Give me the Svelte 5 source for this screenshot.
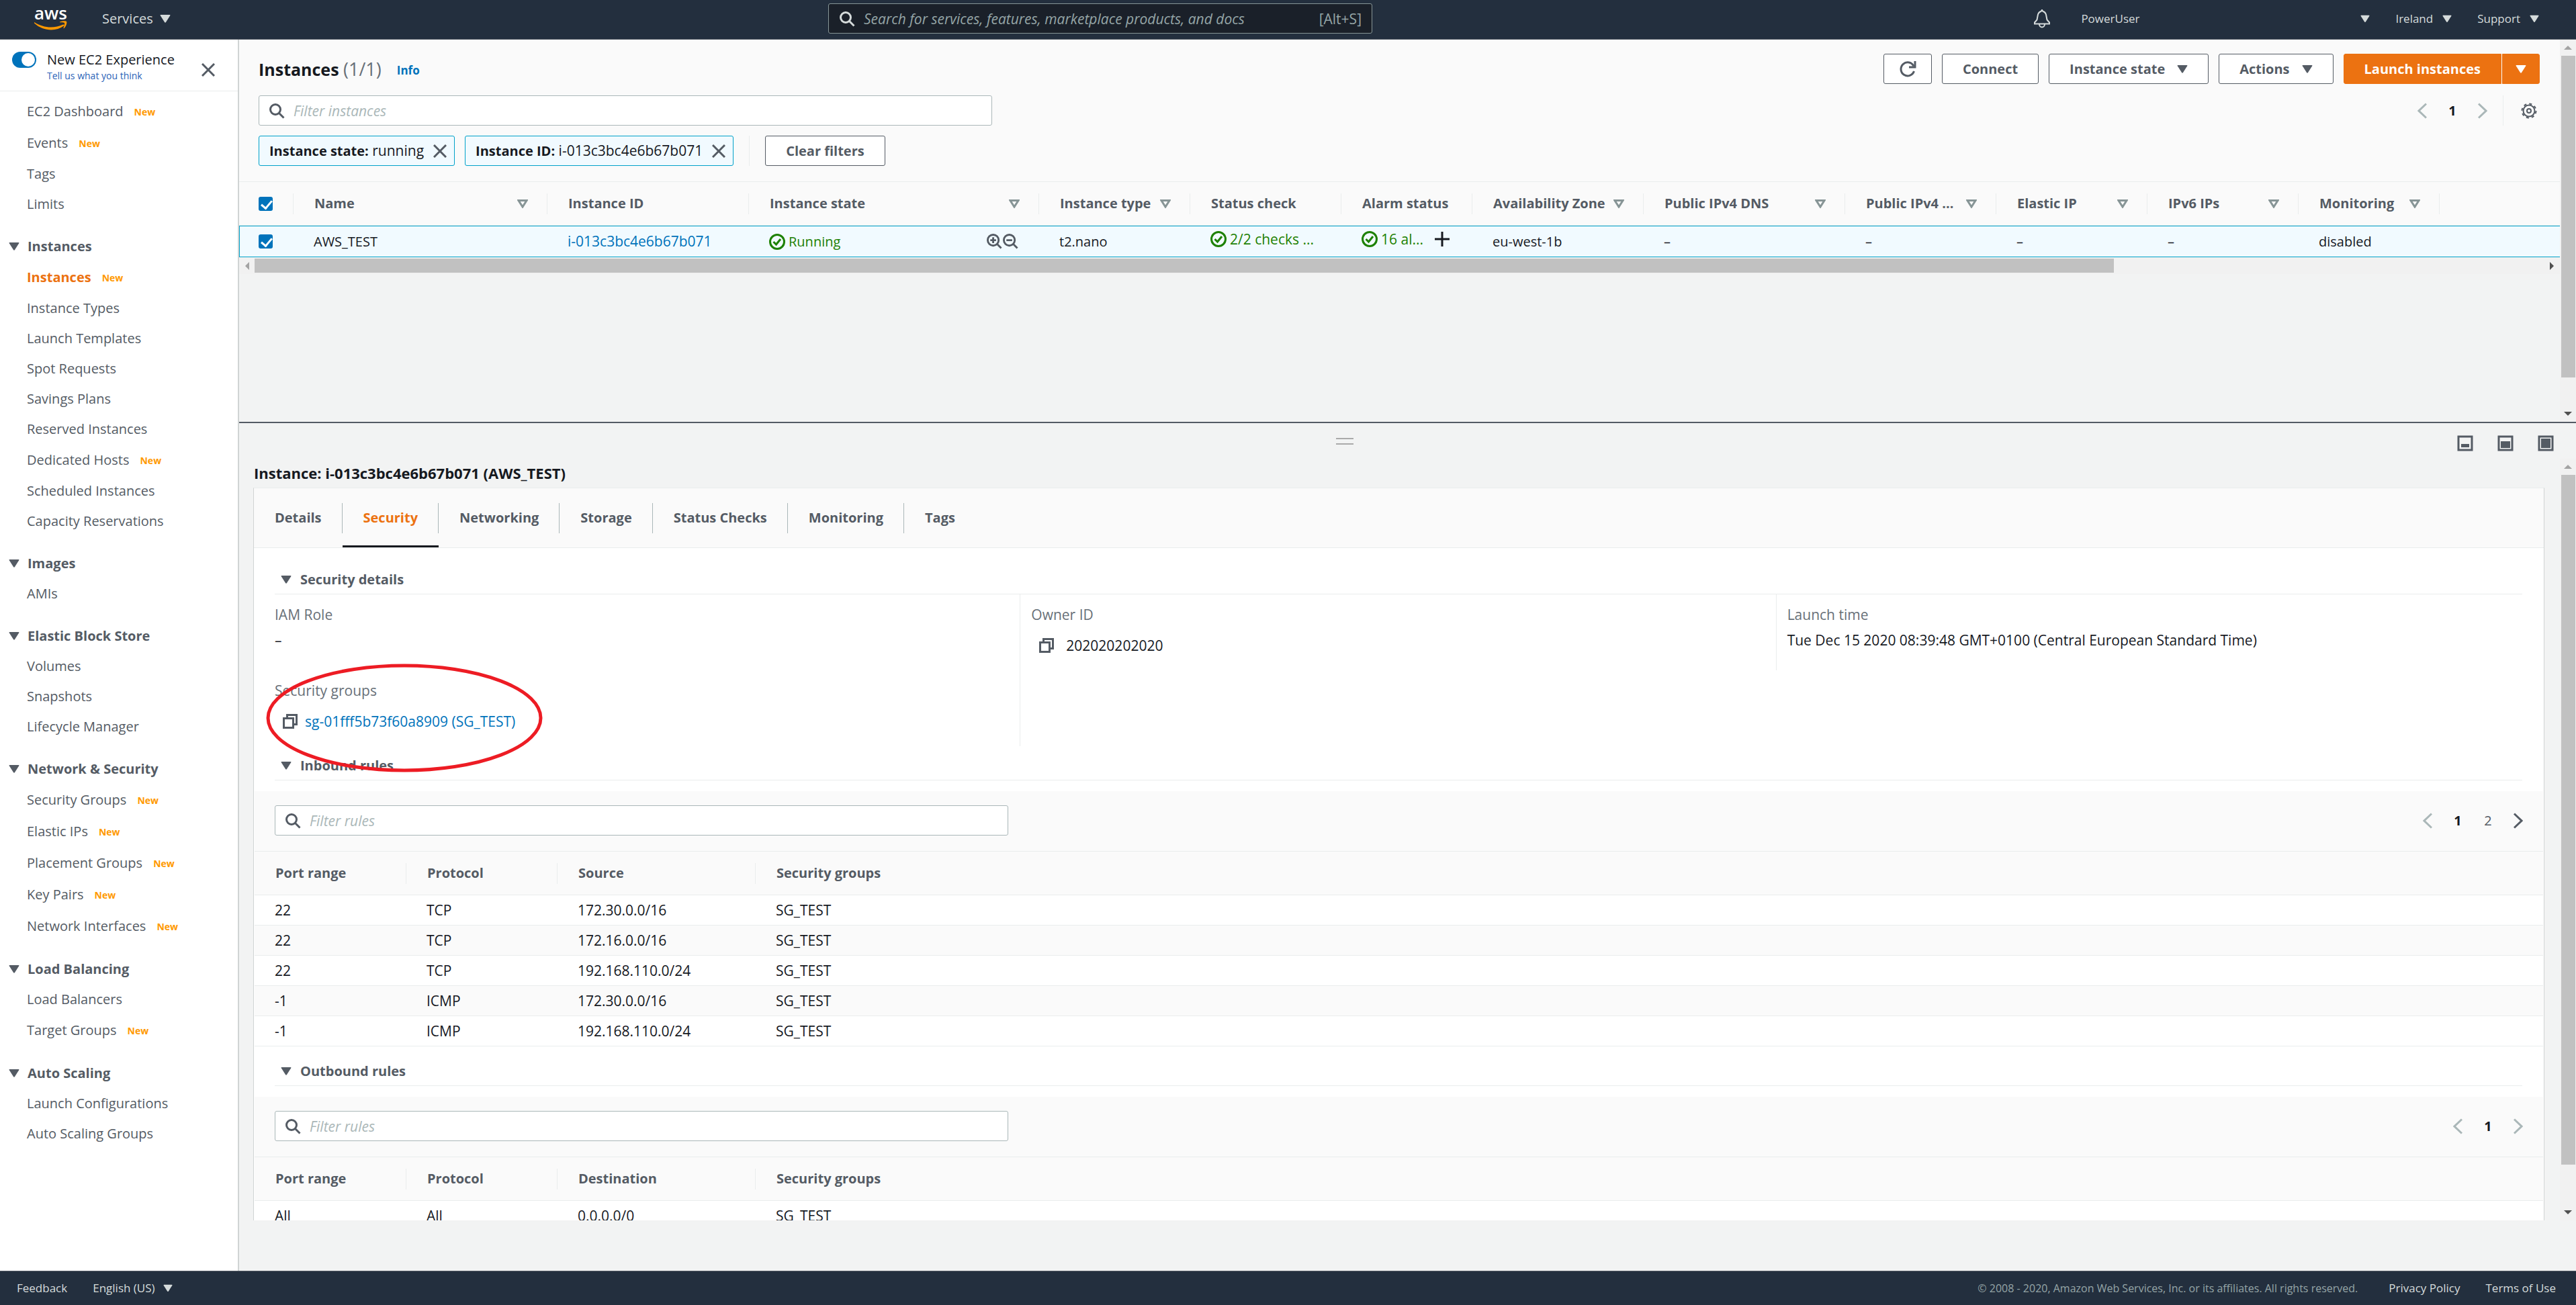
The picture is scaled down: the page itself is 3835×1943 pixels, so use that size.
<script>
  const navTop = [
    { label: "EC2 Dashboard", isNew: true },
    { label: "Events", isNew: true },
    { label: "Tags" },
    { label: "Limits" },
  ];

  const navGroups = [
    {
      title: "Instances",
      items: [
        { label: "Instances", isNew: true, active: true },
        { label: "Instance Types" },
        { label: "Launch Templates" },
        { label: "Spot Requests" },
        { label: "Savings Plans" },
        { label: "Reserved Instances" },
        { label: "Dedicated Hosts", isNew: true },
        { label: "Scheduled Instances" },
        { label: "Capacity Reservations" },
      ],
    },
    { title: "Images", items: [{ label: "AMIs" }] },
    {
      title: "Elastic Block Store",
      items: [
        { label: "Volumes" },
        { label: "Snapshots" },
        { label: "Lifecycle Manager" },
      ],
    },
    {
      title: "Network & Security",
      items: [
        { label: "Security Groups", isNew: true },
        { label: "Elastic IPs", isNew: true },
        { label: "Placement Groups", isNew: true },
        { label: "Key Pairs", isNew: true },
        { label: "Network Interfaces", isNew: true },
      ],
    },
    {
      title: "Load Balancing",
      items: [{ label: "Load Balancers" }, { label: "Target Groups", isNew: true }],
    },
    {
      title: "Auto Scaling",
      items: [{ label: "Launch Configurations" }, { label: "Auto Scaling Groups" }],
    },
  ];

  const columns = [
    { label: "Name", width: 378, sortable: true },
    { label: "Instance ID", width: 300 },
    { label: "Instance state", width: 432, sortable: true },
    { label: "Instance type", width: 225, sortable: true },
    { label: "Status check", width: 225 },
    { label: "Alarm status", width: 195 },
    { label: "Availability Zone", width: 255, sortable: true },
    { label: "Public IPv4 DNS", width: 300, sortable: true },
    { label: "Public IPv4 ...", width: 225, sortable: true },
    { label: "Elastic IP", width: 225, sortable: true },
    { label: "IPv6 IPs", width: 225, sortable: true },
    { label: "Monitoring", width: 210, sortable: true },
  ];

  const tabs = [
    "Details",
    "Security",
    "Networking",
    "Storage",
    "Status Checks",
    "Monitoring",
    "Tags",
  ];
  let activeTab = "Security";

  const ruleSets = [
    {
      id: "inbound",
      title: "Inbound rules",
      target: "Source",
      pages: [1, 2],
      rows: [
        ["22", "TCP", "172.30.0.0/16", "SG_TEST"],
        ["22", "TCP", "172.16.0.0/16", "SG_TEST"],
        ["22", "TCP", "192.168.110.0/24", "SG_TEST"],
        ["-1", "ICMP", "172.30.0.0/16", "SG_TEST"],
        ["-1", "ICMP", "192.168.110.0/24", "SG_TEST"],
      ],
    },
    {
      id: "outbound",
      title: "Outbound rules",
      target: "Destination",
      pages: [1],
      rows: [["All", "All", "0.0.0.0/0", "SG_TEST"]],
    },
  ];
</script>

{#snippet caret()}
  <svg class="caret" viewBox="0 0 16 12" aria-hidden="true">
    <path d="M1.500 0h13q1.500 0 .7 1.300L9 11q-1 1.500-2 0L.8 1.300Q0 0 1.500 0z" />
  </svg>
{/snippet}

{#snippet sortIcon()}
  <svg class="sort" viewBox="0 0 16 13" aria-hidden="true">
    <path d="M2 1.500h12L8 11z" />
  </svg>
{/snippet}

{#snippet search()}
  <svg class="search-icon" viewBox="0 0 24 24" aria-hidden="true">
    <circle cx="10" cy="10" r="7.500" />
    <path d="M15.500 15.500l7 7" />
  </svg>
{/snippet}

{#snippet cross()}
  <svg class="cross" viewBox="0 0 20 20" aria-hidden="true">
    <path d="M1 1l18 18M19 1L1 19" />
  </svg>
{/snippet}

{#snippet chevron(dir)}
  <svg class="chevron" viewBox="0 0 14 24" aria-hidden="true">
    <path d={dir === "left" ? "M13 1.500L2 12l11 10.500" : "M1 1.500L12 12 1 22.500"} />
  </svg>
{/snippet}

{#snippet okIcon()}
  <svg class="ok" viewBox="0 0 24 24" aria-hidden="true">
    <circle cx="12" cy="12" r="10.500" />
    <path d="M6.500 12l4 4L17 8" />
  </svg>
{/snippet}

{#snippet copyIcon()}
  <svg class="copy" viewBox="0 0 22 22" aria-hidden="true">
    <path d="M6.500 5V1.500h14v14H17M1.500 6.500h14v14h-14z" />
  </svg>
{/snippet}

{#snippet navItem(item)}
  <li class="nav__item" class:nav__item--new={item.isNew}>
    <a href="#top" class:active={item.active}>{item.label}</a>
    {#if item.isNew}<span class="badge">New</span>{/if}
  </li>
{/snippet}

<div class="app" id="top">
  <header class="topbar">
    <div class="topbar__left">
      <a class="logo" href="#top" aria-label="AWS home">
        <svg viewBox="0 0 50 34">
          <text x="1" y="18">aws</text>
          <path
            class="smile"
            d="M1 22c13 8.500 29 10 43 3.500 1.500-.5 2.500 1 1 2C33 36.500 14 35.500 1 23.500z"
          />
          <path
            class="smile"
            d="M39 21.500c5-2 10-1.500 10.300 0 .4 2.500-1 7-3.800 9.500-.6.500-1.200.2-1-.5 1-2.500 2-5.800 1.600-6.900-.4-1.200-4-1.300-6.600-1.200z"
          />
        </svg>
      </a>
      <button class="topbar__menu topbar__menu--big">Services {@render caret()}</button>
    </div>
    <label class="topbar__search">
      {@render search()}
      <input
        type="text"
        aria-label="Search"
        placeholder="Search for services, features, marketplace products, and docs"
      />
      <span>[Alt+S]</span>
    </label>
    <div class="topbar__right">
      <button class="bell" aria-label="Notifications">
        <svg viewBox="0 0 26 28">
          <path d="M2 21.500v-2l3.500-4 1.500-8Q8.500 3.500 11.500 3L13 .8 14.500 3q3 .5 4.500 4.500l1.500 8 3.500 4v2z" />
          <path d="M9 22c0 6 8 6 8 0" />
        </svg>
      </button>
      <button class="topbar__menu topbar__menu--user">PowerUser {@render caret()}</button>
      <button class="topbar__menu">Ireland {@render caret()}</button>
      <button class="topbar__menu">Support {@render caret()}</button>
    </div>
  </header>

  <div class="body">
    <aside class="sidebar">
      <div class="sidebar__head">
        <input id="experience" class="toggle" type="checkbox" checked />
        <div class="sidebar__title">
          <label for="experience">New EC2 Experience</label>
          <a href="#top">Tell us what you think</a>
        </div>
        <button class="plain" aria-label="Close navigation">{@render cross()}</button>
      </div>
      <nav class="nav">
        <ul>
          {#each navTop as item}{@render navItem(item)}{/each}
        </ul>
        {#each navGroups as group}
          <button class="nav__group">{@render caret()} {group.title}</button>
          <ul>
            {#each group.items as item}{@render navItem(item)}{/each}
          </ul>
        {/each}
      </nav>
    </aside>

    <main class="main">
      <section class="pane">
        <div class="pane__content">
          <div class="instances__head">
            <div class="row">
              <h1>Instances <span>(1/1)</span></h1>
              <a class="info" href="#top">Info</a>
              <div class="actions">
                <button class="btn btn--icon" aria-label="Refresh">
                  <svg viewBox="0 0 26 26">
                    <path d="M22.500 16A10 10 0 1 1 22 8.500" />
                    <path d="M24 1v9h-9" />
                  </svg>
                </button>
                <button class="btn">Connect</button>
                <button class="btn">Instance state {@render caret()}</button>
                <button class="btn">Actions {@render caret()}</button>
                <div class="split">
                  <button class="btn btn--primary">Launch instances</button>
                  <button class="btn btn--primary btn--caret" aria-label="More launch options">
                    {@render caret()}
                  </button>
                </div>
              </div>
            </div>
            <div class="row row--filter">
              <label class="filter">
                {@render search()}
                <input type="text" aria-label="Filter instances" placeholder="Filter instances" />
              </label>
              <div class="pager">
                <button class="plain dim" aria-label="Previous page">{@render chevron("left")}</button>
                <button class="plain current">1</button>
                <button class="plain dim" aria-label="Next page">{@render chevron("right")}</button>
              </div>
              <button class="plain gear" aria-label="Preferences">
                <svg viewBox="0 0 24 24">
                  <circle cx="12" cy="12" r="8.500" />
                  <circle class="teeth" cx="12" cy="12" r="10.500" />
                  <circle cx="12" cy="12" r="3" />
                </svg>
              </button>
            </div>
            <div class="row row--tokens">
              <span class="token">
                <span><b>Instance state:</b> running</span>
                <button class="plain" aria-label="Remove filter">{@render cross()}</button>
              </span>
              <span class="token">
                <span><b>Instance ID:</b> i-013c3bc4e6b67b071</span>
                <button class="plain" aria-label="Remove filter">{@render cross()}</button>
              </span>
              <div class="clear"><button class="btn">Clear filters</button></div>
            </div>
          </div>

          <table class="instances">
            <colgroup>
              <col style="width: 81px" />
              {#each columns as column}
                <col style="width: {column.width}px" />
              {/each}
              <col />
            </colgroup>
            <thead>
              <tr>
                <th>
                  <div class="th th--check">
                    <input type="checkbox" aria-label="Select all" checked />
                  </div>
                </th>
                {#each columns as column}
                  <th>
                    <div class="th">
                      {column.label}
                      {#if column.sortable}{@render sortIcon()}{/if}
                    </div>
                  </th>
                {/each}
                <th></th>
              </tr>
            </thead>
            <tbody>
              <tr>
                <td class="check"><input type="checkbox" aria-label="Select AWS_TEST" checked /></td>
                <td>AWS_TEST</td>
                <td><a href="#top">i-013c3bc4e6b67b071</a></td>
                <td>
                  <div class="state">
                    <span class="good">{@render okIcon()} Running</span>
                    <span class="magnifiers">
                      <svg viewBox="0 0 24 24" aria-hidden="true">
                        <circle cx="10" cy="10" r="8.500" />
                        <path d="M16 16l6.500 6.500M10 5.500v9M5.500 10h9" />
                      </svg>
                      <svg viewBox="0 0 24 24" aria-hidden="true">
                        <circle cx="10" cy="10" r="8.500" />
                        <path d="M16 16l6.500 6.500M5.500 10h9" />
                      </svg>
                    </span>
                  </div>
                </td>
                <td>t2.nano</td>
                <td class="lifted"><span class="good">{@render okIcon()} 2/2 checks ...</span></td>
                <td class="lifted">
                  <div class="alarm">
                    <span class="good">{@render okIcon()} 16 al...</span>
                    <svg class="plus" viewBox="0 0 22 22" aria-hidden="true">
                      <path d="M11 0v22M0 11h22" />
                    </svg>
                  </div>
                </td>
                <td>eu-west-1b</td>
                <td>–</td>
                <td>–</td>
                <td>–</td>
                <td>–</td>
                <td>disabled</td>
                <td></td>
              </tr>
            </tbody>
          </table>
          <div class="hscroll" aria-hidden="true">
            <i class="arrow arrow--left"></i>
            <div class="hscroll__thumb"></div>
            <i class="arrow arrow--right"></i>
          </div>
        </div>
        <div class="vscroll" aria-hidden="true">
          <i class="arrow arrow--up"></i>
          <div class="vscroll__thumb vscroll__thumb--top"></div>
          <i class="arrow arrow--down"></i>
        </div>
      </section>

      <section class="details">
        <div class="details__bar">
          <div class="handle"></div>
          <div class="layouts">
            <button class="plain" aria-label="Minimize panel">
              <svg viewBox="0 0 24 24">
                <path d="M2 2h20v20H2z" />
                <path class="fill" d="M6 13h12v5H6z" />
              </svg>
            </button>
            <button class="plain" aria-label="Split panel">
              <svg viewBox="0 0 24 24">
                <path d="M2 2h20v20H2z" />
                <path class="fill" d="M5 9h14v10H5z" />
              </svg>
            </button>
            <button class="plain" aria-label="Maximize panel">
              <svg viewBox="0 0 24 24">
                <path d="M2 2h20v20H2z" />
                <path class="fill" d="M5 5h14v14H5z" />
              </svg>
            </button>
          </div>
        </div>

        <div class="details__scroll">
          <div class="details__content">
            <h2>Instance: i-013c3bc4e6b67b071 (AWS_TEST)</h2>
            <div class="card">
              <div class="tabs" role="tablist">
                {#each tabs as tab}
                  <button
                    class="tab"
                    role="tab"
                    aria-selected={tab === activeTab}
                    on:click={() => (activeTab = tab)}
                  >
                    <span>{tab}</span>
                  </button>
                {/each}
              </div>

              <div class="panel">
                <h3 class="section">{@render caret()} Security details</h3>
                <div class="facts">
                  <div class="facts__column">
                    <div class="fact">
                      <div class="fact__label">IAM Role</div>
                      <div class="fact__value">–</div>
                    </div>
                    <div class="fact">
                      <div class="fact__label">Security groups</div>
                      <div class="fact__value fact__value--copy">
                        {@render copyIcon()}
                        <a href="#top">sg-01fff5b73f60a8909 (SG_TEST)</a>
                      </div>
                      <svg class="highlight" viewBox="0 0 412 162" aria-hidden="true">
                        <ellipse cx="206" cy="81" rx="203" ry="78" />
                      </svg>
                    </div>
                  </div>
                  <div class="facts__column">
                    <div class="fact">
                      <div class="fact__label">Owner ID</div>
                      <div class="fact__value fact__value--copy fact__value--wide">
                        {@render copyIcon()} 202020202020
                      </div>
                    </div>
                  </div>
                  <div class="facts__column">
                    <div class="fact">
                      <div class="fact__label">Launch time</div>
                      <div class="fact__value">
                        Tue Dec 15 2020 08:39:48 GMT+0100 (Central European Standard Time)
                      </div>
                    </div>
                  </div>
                </div>

                {#each ruleSets as set}
                  <h3 class="section">{@render caret()} {set.title}</h3>
                  <div class="rules">
                    <div class="rules__bar">
                      <label class="filter">
                        {@render search()}
                        <input
                          type="text"
                          aria-label="Filter {set.id} rules"
                          placeholder="Filter rules"
                        />
                      </label>
                      <div class="pager">
                        <button class="plain dim" aria-label="Previous page">
                          {@render chevron("left")}
                        </button>
                        {#each set.pages as page}
                          <button class="plain" class:current={page === 1}>{page}</button>
                        {/each}
                        <button
                          class="plain"
                          class:dim={set.pages.length === 1}
                          aria-label="Next page"
                        >
                          {@render chevron("right")}
                        </button>
                      </div>
                    </div>
                    <table>
                      <thead>
                        <tr>
                          <th class="port"><div class="th">Port range</div></th>
                          <th class="protocol"><div class="th">Protocol</div></th>
                          <th class="target"><div class="th">{set.target}</div></th>
                          <th><div class="th th--last">Security groups</div></th>
                        </tr>
                      </thead>
                      <tbody>
                        {#each set.rows as row}
                          <tr>
                            {#each row as cell}<td>{cell}</td>{/each}
                          </tr>
                        {/each}
                      </tbody>
                    </table>
                  </div>
                {/each}
              </div>
            </div>
          </div>
          <div class="vscroll" aria-hidden="true">
            <i class="arrow arrow--up"></i>
            <div class="vscroll__thumb"></div>
            <i class="arrow arrow--down"></i>
          </div>
        </div>
      </section>
    </main>
  </div>

  <footer class="footer">
    <a href="#top">Feedback</a>
    <button class="footer__language">English (US) {@render caret()}</button>
    <span class="footer__copyright">
      © 2008 - 2020, Amazon Web Services, Inc. or its affiliates. All rights reserved.
    </span>
    <a href="#top">Privacy Policy</a>
    <a href="#top">Terms of Use</a>
  </footer>
</div>

<style>
  :global(body) {
    margin: 0;
  }

  .app {
    display: flex;
    flex-direction: column;
    height: 100vh;
    overflow: hidden;
    background: #f2f3f3;
    color: #16191f;
    font-family: "Open Sans", "Noto Sans", sans-serif;
    font-size: 20px;
    line-height: 30px;
  }
  .app * {
    box-sizing: border-box;
  }

  button,
  input {
    font: inherit;
    color: inherit;
  }
  button {
    display: flex;
    align-items: center;
    margin: 0;
    padding: 0;
    border: 0;
    background: none;
    white-space: nowrap;
    cursor: pointer;
  }
  a {
    color: #0073bb;
    text-decoration: none;
  }
  ul {
    margin: 0;
    padding: 0;
    list-style: none;
  }
  svg {
    display: block;
    flex: none;
    fill: none;
    stroke: currentColor;
    stroke-width: 3;
  }
  .caret {
    width: 16px;
    height: 12px;
    fill: currentColor;
    stroke: none;
  }
  .sort {
    width: 16px;
    height: 13px;
    color: #879596;
  }
  .search-icon {
    width: 24px;
    height: 24px;
  }
  .cross {
    width: 20px;
    height: 20px;
    color: #545b64;
  }
  .chevron {
    width: 14px;
    height: 24px;
  }
  .ok {
    width: 24px;
    height: 24px;
  }
  .copy {
    width: 22px;
    height: 22px;
    color: #545b64;
  }

  /* top bar */
  .topbar {
    display: grid;
    grid-template-columns: 1233fr 810fr 1792fr;
    align-items: center;
    flex: none;
    height: 59px;
    padding-bottom: 3px;
    border-bottom: 1px solid #545b64;
    background: #232f3e;
    color: #d5dbdb;
    font-size: 17px;
  }
  .topbar__left {
    display: flex;
    align-items: center;
    gap: 52px;
    padding-left: 50px;
  }
  .logo svg {
    width: 50px;
    height: 34px;
    overflow: visible;
  }
  .logo text {
    fill: #fff;
    stroke: none;
    font-size: 26px;
    font-weight: 600;
  }
  .smile {
    fill: #f90;
    stroke: none;
  }
  .topbar__menu {
    gap: 14px;
  }
  .topbar__menu .caret {
    width: 14px;
  }
  .topbar__menu--big {
    gap: 10px;
    font-size: 20px;
  }
  .topbar__menu--big .caret {
    width: 16px;
  }
  .topbar__menu--user {
    flex: 0 0 430px;
    justify-content: space-between;
  }
  .topbar__search {
    display: flex;
    align-items: center;
    gap: 13px;
    height: 45px;
    padding: 0 15px;
    border: 1px solid #879596;
    border-radius: 3px;
    background: #1a2029;
    font-size: 21px;
  }
  .topbar__search span {
    color: #95a5a6;
  }
  .topbar__right {
    display: flex;
    justify-content: flex-end;
    gap: 38px;
    padding-right: 55px;
  }
  .bell {
    margin-right: 7px;
  }
  .bell svg {
    width: 26px;
    height: 28px;
    stroke-width: 2;
  }

  input[type="text"] {
    flex: 1;
    min-width: 0;
    padding: 0;
    border: 0;
    outline: 0;
    background: none;
  }
  input::placeholder {
    color: #aab7b8;
    font-style: italic;
    opacity: 1;
  }
  .topbar__search input::placeholder {
    color: #95a5a6;
  }

  .body {
    display: flex;
    flex: 1;
    min-height: 0;
  }

  /* sidebar */
  .sidebar {
    flex: none;
    width: 356px;
    border-right: 2px solid #d0d4d4;
    background: #fff;
    color: #545b64;
  }
  .sidebar__head {
    display: flex;
    justify-content: space-between;
    height: 77px;
    padding: 15px 34px 0 18px;
    border-bottom: 1px solid #eaeded;
  }
  .sidebar__head .plain {
    height: 60px;
  }
  .sidebar__title {
    display: flex;
    flex-direction: column;
    flex: 1;
    padding-left: 16px;
    color: #16191f;
  }
  .sidebar__title a {
    color: #2a63b8;
    font-size: 14px;
    line-height: 18px;
  }
  .toggle {
    appearance: none;
    flex: none;
    width: 36px;
    height: 24px;
    margin: 3px 0 0;
    padding: 2px;
    border-radius: 12px;
    background: #0073bb;
  }
  .toggle::before {
    content: "";
    display: block;
    width: 20px;
    height: 20px;
    margin-left: auto;
    border-radius: 50%;
    background: #fff;
  }
  .nav {
    padding-top: 6px;
  }
  .nav__item {
    display: flex;
    align-items: center;
    gap: 16px;
    height: 45px;
    padding-left: 40px;
  }
  .nav__item--new {
    height: 47px;
  }
  .nav__item a {
    color: #545b64;
  }
  .nav__item a.active {
    color: #ec7211;
    font-weight: 700;
  }
  .badge {
    padding-top: 3px;
    color: #ff9900;
    font-size: 14px;
    font-weight: 700;
  }
  .nav__group {
    gap: 12px;
    height: 45px;
    margin-top: 18px;
    padding-left: 13px;
    font-weight: 700;
  }

  /* instance list */
  .main {
    display: flex;
    flex: 1;
    flex-direction: column;
    min-width: 0;
  }
  .pane {
    display: flex;
    flex: none;
    height: 571px;
    border-bottom: 2px solid #545b64;
  }
  .pane__content {
    flex: 1;
    min-width: 0;
  }
  .instances__head {
    padding: 21px 30px 23px 29px;
    border-bottom: 1px solid #eaeded;
    background: #fafafa;
  }
  .row {
    display: flex;
    align-items: center;
    height: 45px;
  }
  h1 {
    margin: 0;
    font-size: 25px;
    line-height: 36px;
  }
  h1 span {
    color: #687078;
    font-size: 27px;
    font-weight: 400;
  }
  .info {
    padding: 5px 0 0 23px;
    font-size: 17px;
    font-weight: 700;
  }
  .actions {
    display: flex;
    gap: 15px;
    margin-left: auto;
  }
  .btn {
    gap: 18px;
    height: 45px;
    padding: 0 30px;
    border: 1px solid #545b64;
    border-radius: 3px;
    background: #fff;
    color: #545b64;
    font-weight: 700;
  }
  .btn--icon {
    padding: 0 22px;
  }
  .btn--icon svg {
    width: 26px;
    height: 26px;
  }
  .split {
    display: flex;
    gap: 1px;
  }
  .btn--primary {
    border-color: #ec7211;
    border-radius: 3px 0 0 3px;
    background: #ec7211;
    color: #fff;
  }
  .btn--caret {
    padding: 0 19px;
    border-radius: 0 3px 3px 0;
  }
  .row--filter {
    margin-top: 17px;
  }
  .filter {
    display: flex;
    align-items: center;
    gap: 13px;
    flex: 0 0 1092px;
    height: 45px;
    padding: 0 14px;
    border: 1px solid #aab7b8;
    border-radius: 3px;
    background: #fff;
    font-size: 21px;
  }
  .filter .search-icon {
    color: #545b64;
  }
  .pager {
    display: flex;
    gap: 15px;
    margin-left: auto;
    color: #545b64;
  }
  .pager .plain {
    justify-content: center;
    width: 30px;
  }
  .pager .current {
    color: #16191f;
    font-weight: 700;
  }
  .pager .dim {
    color: #aab7b8;
  }
  .gear {
    height: 45px;
    margin-left: 15px;
    padding: 0 4px 0 26px;
    border-left: 1px solid #eaeded;
    color: #545b64;
  }
  .gear svg {
    width: 24px;
    height: 24px;
    stroke-width: 2;
  }
  .teeth {
    stroke-dasharray: 4.120;
  }
  .row--tokens {
    gap: 15px;
    margin-top: 15px;
  }
  .token {
    display: flex;
    align-items: center;
    gap: 14px;
    height: 45px;
    padding: 0 11px 0 15px;
    border: 1px solid #00a1c9;
    border-radius: 3px;
    background: #f1faff;
    font-size: 21px;
  }
  .token b {
    font-size: 20px;
  }
  .clear {
    margin-left: 8px;
    padding-left: 23px;
    border-left: 1px solid #eaeded;
  }

  table {
    width: 100%;
    table-layout: fixed;
    border-collapse: separate;
    border-spacing: 0;
  }
  th {
    height: 65px;
    padding: 0;
    border-bottom: 1px solid #eaeded;
    background: #fafafa;
    color: #545b64;
    font-weight: 700;
    text-align: left;
    white-space: nowrap;
  }
  .th {
    display: flex;
    align-items: center;
    justify-content: space-between;
    height: 31px;
    padding: 0 28px 0 31px;
    border-right: 1px solid #eaeded;
  }
  .th--last {
    border: 0;
  }
  .th--check {
    padding-left: 29px;
  }
  td {
    height: 45px;
    padding: 0 0 0 30px;
    white-space: nowrap;
  }
  input[type="checkbox"]:not(.toggle) {
    appearance: none;
    display: block;
    width: 21px;
    height: 21px;
    margin: 0;
    padding: 2px 0 0 7px;
    border-radius: 3px;
    background: #0073bb;
  }
  input[type="checkbox"]:not(.toggle)::before {
    content: "";
    display: block;
    width: 7px;
    height: 13px;
    border: solid #fff;
    border-width: 0 3px 3px 0;
    transform: rotate(40deg);
  }
  .instances td {
    border-top: 1px solid #00a1c9;
    border-bottom: 1px solid #00a1c9;
    height: 47px;
    background: #f1faff;
  }
  .instances td a {
    font-size: 21px;
  }
  .instances td.check {
    padding-left: 28px;
    border-left: 1px solid #00a1c9;
  }
  .instances td.lifted {
    padding-top: 4px;
    vertical-align: top;
  }
  .lifted {
    font-size: 21px;
  }
  .good {
    display: flex;
    align-items: center;
    gap: 5px;
    color: #1d8102;
  }
  .state {
    display: flex;
    align-items: center;
    justify-content: space-between;
    padding-right: 31px;
  }
  .magnifiers {
    display: flex;
    gap: 1px;
    color: #545b64;
  }
  .magnifiers svg {
    width: 23px;
    height: 23px;
    stroke-width: 3;
  }
  .alarm {
    display: flex;
    align-items: center;
    gap: 17px;
  }
  .plus {
    width: 22px;
    height: 22px;
  }

  /* scrollbars */
  .hscroll {
    display: flex;
    align-items: center;
    height: 25px;
    padding: 2px 9px;
    background: #f1f1f1;
  }
  .hscroll__thumb {
    width: calc(81% - 16px);
    height: 21px;
    margin: 0 auto 0 8px;
    background: #c1c1c1;
  }
  .vscroll {
    display: flex;
    align-items: center;
    flex: none;
    flex-direction: column;
    width: 24px;
    padding: 9px 0;
    background: #f1f1f1;
  }
  .vscroll__thumb {
    width: 21px;
    height: 92%;
    margin: 9px 0 auto;
    background: #c1c1c1;
  }
  .vscroll__thumb--top {
    height: 87%;
  }
  .arrow {
    flex: none;
    border: 6px solid transparent;
  }
  .arrow--left {
    border-right-color: #a3a3a3;
    border-left: 0;
  }
  .arrow--right {
    border-left-color: #505050;
    border-right: 0;
  }
  .arrow--up {
    border-bottom-color: #a3a3a3;
    border-top: 0;
  }
  .arrow--down {
    border-top-color: #505050;
    border-bottom: 0;
  }

  /* details split panel */
  .details {
    display: flex;
    flex: 1;
    flex-direction: column;
    min-height: 0;
    padding-bottom: 75px;
  }
  .details__bar {
    display: flex;
    align-items: center;
    flex: none;
    height: 53px;
    padding-right: 33px;
  }
  .handle {
    width: 26px;
    height: 10px;
    margin: 0 auto;
    border: solid #aaa;
    border-width: 2px 0;
  }
  .layouts {
    display: flex;
    gap: 36px;
    padding: 7px 0 0 10px;
    color: #545b64;
  }
  .layouts svg {
    width: 24px;
    height: 24px;
  }
  .fill {
    fill: currentColor;
    stroke: none;
  }
  .details__scroll {
    display: flex;
    flex: 1;
    min-height: 0;
  }
  .details__content {
    flex: 1;
    min-width: 0;
    overflow: hidden;
    padding: 6px 23px 0 21px;
  }
  h2 {
    margin: 0 0 7px 1px;
    font-size: 22px;
    line-height: 30px;
  }
  .card {
    border: 1px solid #d0d4d4;
    border-top-color: #eaeded;
    background: #fff;
  }
  .tabs {
    display: flex;
    height: 89px;
    border-bottom: 1px solid #eaeded;
    background: #fafafa;
  }
  .tab {
    color: #545b64;
    font-weight: 700;
    border-top: 3px solid transparent;
    border-bottom: 3px solid transparent;
  }
  .tab span {
    padding: 7px 30px 8px 31px;
    border-right: 1px solid #aab7b8;
  }
  .tab:last-child span {
    border: 0;
  }
  .tab[aria-selected="true"] {
    border-bottom-color: #16191f;
    color: #ec7211;
  }
  .panel {
    padding-top: 18px;
  }
  .section {
    display: flex;
    align-items: center;
    gap: 13px;
    margin: 0 32px 0 31px;
    padding: 14px 0 6px 9px;
    border-bottom: 1px solid #eaeded;
    color: #545b64;
    font-size: 20px;
    line-height: 30px;
  }
  .facts {
    display: grid;
    grid-template-columns: repeat(3, 1fr);
    align-items: start;
    margin: 0 17px 0 16px;
    font-size: 21px;
  }
  .facts__column + .facts__column {
    margin-left: -1px;
  }
  .facts__column:not(:last-child) {
    border-right: 1px solid #eaeded;
  }
  .fact {
    position: relative;
    min-height: 113px;
    padding: 15px 15px 0;
  }
  .facts__column + .facts__column .fact {
    padding-left: 17px;
  }
  .fact__label {
    color: #687078;
  }
  .fact__value {
    margin-top: 8px;
  }
  .fact__value--copy {
    display: flex;
    align-items: center;
    gap: 11px;
    height: 45px;
    padding-left: 12px;
  }
  .fact__value--wide {
    gap: 18px;
  }
  .highlight {
    position: absolute;
    top: -10px;
    left: 2px;
    width: 412px;
    height: 162px;
    color: #ed1c24;
    stroke-width: 5;
  }
  .rules {
    margin: 16px 1px 0;
    padding-bottom: 8px;
  }
  .rules__bar {
    display: flex;
    align-items: center;
    height: 90px;
    padding: 0 22px 2px 30px;
    border-bottom: 1px solid #eaeded;
    background: #fafafa;
  }
  .rules td {
    border-bottom: 1px solid #eaeded;
    font-size: 21px;
  }
  .rules tr:nth-child(even) td {
    background: #fafafa;
  }
  .port {
    width: 226px;
  }
  .protocol {
    width: 225px;
  }
  .target {
    width: 295px;
  }

  /* footer */
  .footer {
    display: flex;
    align-items: center;
    flex: none;
    gap: 38px;
    height: 51px;
    padding: 0 30px 0 25px;
    border-top: 1px solid #545b64;
    background: #232f3e;
    color: #d5dbdb;
    font-size: 17px;
  }
  .footer a {
    color: #d5dbdb;
  }
  .footer__language {
    gap: 12px;
  }
  .footer__language .caret {
    width: 14px;
  }
  .footer__copyright {
    margin: 0 8px 0 auto;
    color: #95a5a6;
    font-size: 16px;
  }
</style>
